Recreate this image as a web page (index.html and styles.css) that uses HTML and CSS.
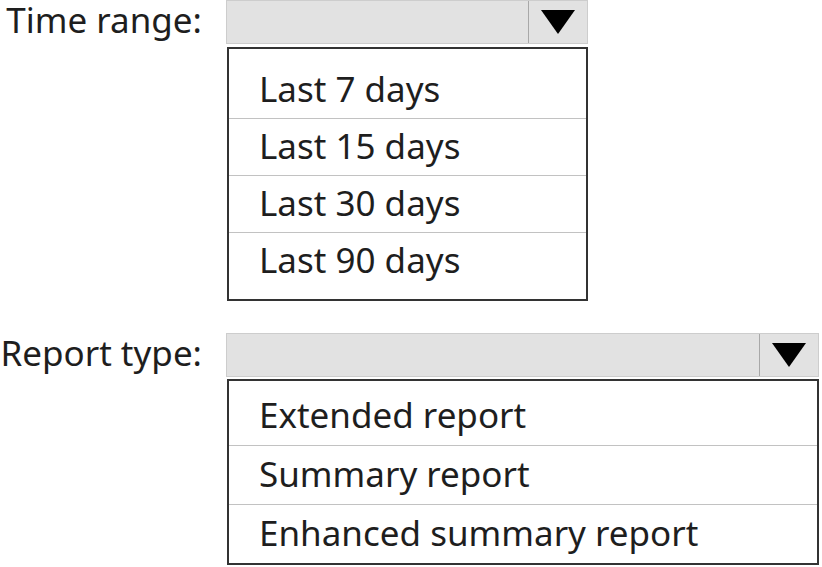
FILE: index.html
```html
<!DOCTYPE html>
<html lang="en">
  <head>
    <meta charset="utf-8">
    <link rel="stylesheet" href="styles.css">
    <title>Report options</title>
  </head>
  <body>
    <div class="field">
      <div class="label">Time range:</div>
      <div class="select short">
        <div class="bar">
          <div class="value"></div>
          <div class="arrow">
            <svg width="34" height="24" viewBox="0 0 34 24"><polygon points="0,0 34,0 17,24" fill="#000"/></svg>
          </div>
        </div>
        <div class="menu menu-time">
          <div class="option">Last 7 days</div>
          <div class="option">Last 15 days</div>
          <div class="option">Last 30 days</div>
          <div class="option">Last 90 days</div>
        </div>
      </div>
    </div>
    <div class="field second">
      <div class="label">Report type:</div>
      <div class="select wide">
        <div class="bar">
          <div class="value"></div>
          <div class="arrow">
            <svg width="34" height="24" viewBox="0 0 34 24"><polygon points="0,0 34,0 17,24" fill="#000"/></svg>
          </div>
        </div>
        <div class="menu menu-report">
          <div class="option">Extended report</div>
          <div class="option">Summary report</div>
          <div class="option">Enhanced summary report</div>
        </div>
      </div>
    </div>
  </body>
</html>
```

FILE: styles.css
```css
body {
  margin: 0;
  background: #fff;
  color: #1e1e1e;
  font-family: "Noto Sans", "Open Sans", sans-serif;
}
.field {
  display: flex;
  align-items: flex-start;
}
.second {
  margin-top: 32px;
}
.label {
  width: 202px;
  height: 38px;
  display: flex;
  align-items: center;
  justify-content: flex-end;
  font-size: 35px;
  line-height: 1;
  padding-right: 24px;
  padding-bottom: 6px;
  white-space: nowrap;
}
.short {
  width: 362px;
}
.wide {
  width: 593px;
}
.bar {
  display: flex;
  height: 44px;
  box-sizing: border-box;
  background: #e2e2e2;
  border: 1px solid #cdcdcd;
}
.value {
  flex: 1;
}
.arrow {
  width: 58px;
  border-left: 1px solid #a8a8a8;
  display: flex;
  align-items: center;
  justify-content: center;
}
.menu {
  margin-top: 3px;
  margin-left: 1px;
  border: 2px solid #333;
  background: #fff;
}
.menu-time {
  padding: 12px 0 10px;
}
.menu-report {
  margin-top: 2px;
  padding: 5px 0 0;
}
.option {
  display: flex;
  align-items: center;
  padding-left: 30px;
  padding-bottom: 3px;
  font-size: 35px;
  box-sizing: border-box;
  height: 57px;
  border-top: 1px solid #c2c2c2;
}
.option:first-child {
  border-top: none;
}
.menu-report .option {
  height: 59px;
}
```
